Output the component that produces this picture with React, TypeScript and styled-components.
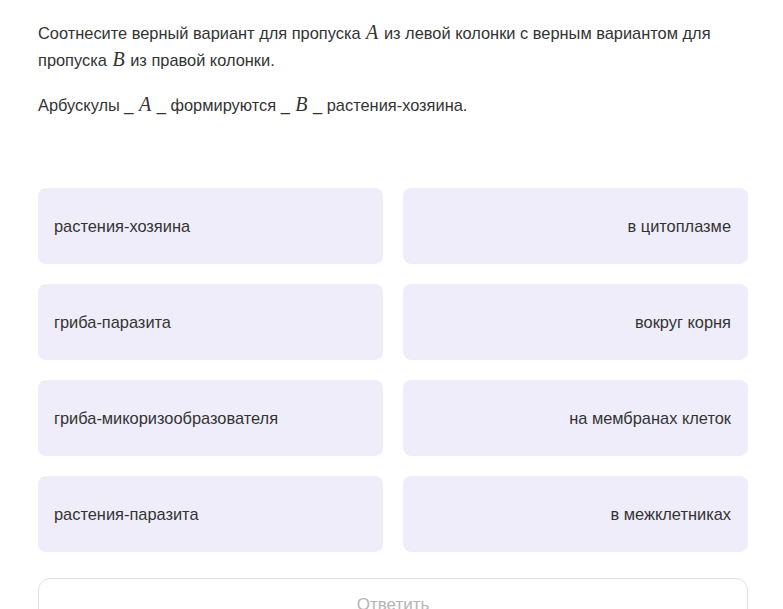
import React from 'react';
import styled, { createGlobalStyle } from 'styled-components';

const GlobalStyle = createGlobalStyle`
  body {
    margin: 0;
    background: #ffffff;
    font-family: 'Liberation Sans', Arial, sans-serif;
  }
`;

const Page = styled.div`
  padding: 20px 35px 0 38px;
  color: #333333;
`;

const Question = styled.p`
  margin: 0 0 18px;
  font-size: 16.4px;
  line-height: 27px;
  max-width: 700px;
`;

const MathVar = styled.span`
  font-family: 'Liberation Serif', 'Times New Roman', serif;
  font-style: italic;
  font-size: 20px;
  line-height: 1;
  padding: 0 1px;
`;

const Grid = styled.div`
  display: grid;
  grid-template-columns: 345px 345px;
  gap: 20px;
  margin-top: 69px;
`;

const Option = styled.div<{ $right?: boolean }>`
  height: 76px;
  box-sizing: border-box;
  border-radius: 8px;
  background: #f0edfa;
  display: flex;
  align-items: center;
  justify-content: ${(p) => (p.$right ? 'flex-end' : 'flex-start')};
  padding: 0 17px 0 16px;
  font-size: 16.4px;
  color: #333333;
`;

const AnswerButton = styled.button`
  display: block;
  width: 710px;
  height: 54px;
  margin-top: 26px;
  border: 1px solid #e2e2e6;
  border-radius: 12px;
  background: #ffffff;
  color: #b4b4b8;
  font-family: 'Liberation Sans', Arial, sans-serif;
  font-size: 17px;
`;

const left = ['растения-хозяина', 'гриба-паразита', 'гриба-микоризообразователя', 'растения-паразита'];
const right = ['в цитоплазме', 'вокруг корня', 'на мембранах клеток', 'в межклетниках'];

const App: React.FC = () => (
  <>
    <GlobalStyle />
    <Page>
      <Question>
        Соотнесите верный вариант для пропуска <MathVar>A</MathVar> из левой колонки с верным вариантом для
        пропуска <MathVar>B</MathVar> из правой колонки.
      </Question>
      <Question>
        Арбускулы _ <MathVar>A</MathVar> _ формируются _ <MathVar>B</MathVar> _ растения-хозяина.
      </Question>
      <Grid>
        {left.map((l, i) => (
          <React.Fragment key={l}>
            <Option>{l}</Option>
            <Option $right>{right[i]}</Option>
          </React.Fragment>
        ))}
      </Grid>
      <AnswerButton>Ответить</AnswerButton>
    </Page>
  </>
);

export default App;
